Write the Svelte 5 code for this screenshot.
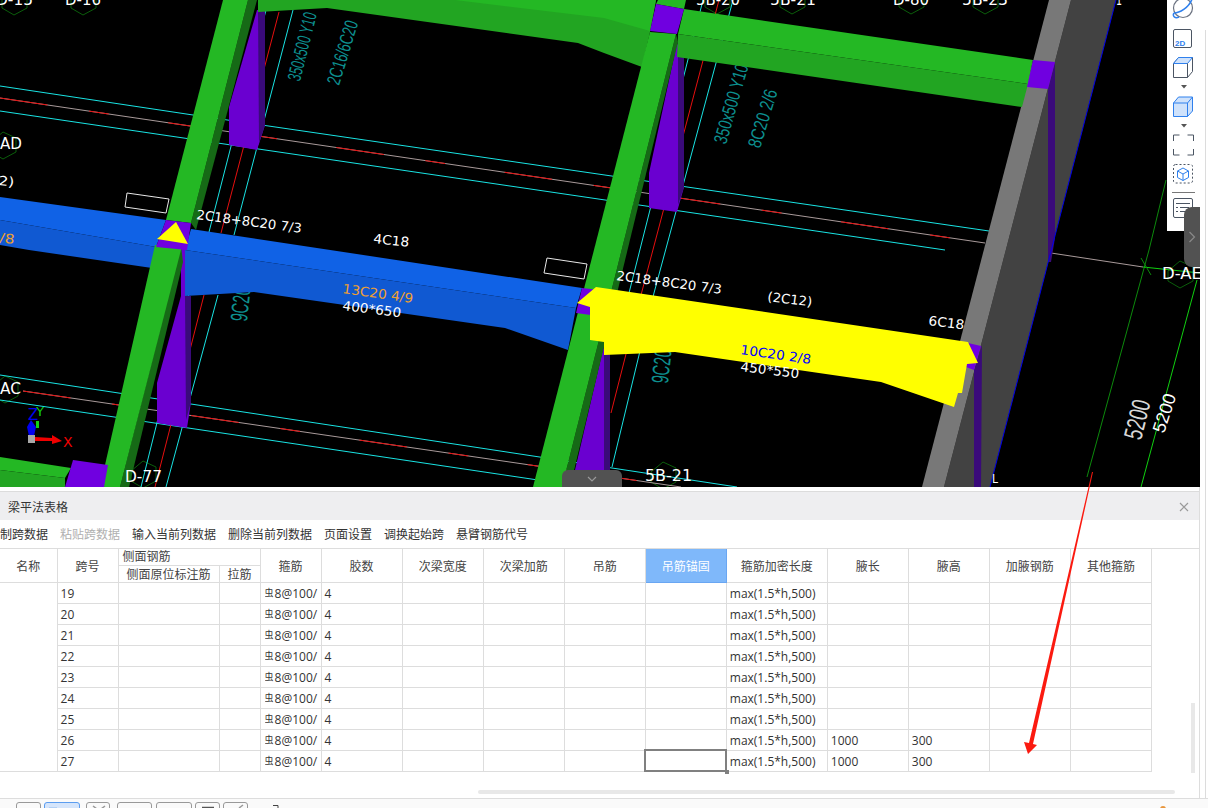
<script lang="ts">
	// scene data, page coordinates of the 3d view
	const cyanLines = [
		'0,86 193,115', '193,115 989,231', '0,111 945,250', '0,375 737,487', '0,400 585,487',
		'293,10 234,235', '266,10 209,232', '218,295 166,487', '190,290 141,487',
		'733,0 654,293 612,467', '703,0 629,293'
	];
	const midLines = ['0,98 985,243', '23,391 681,487'];
	const redLines = ['279,12 221,233', '204,295 155,487', '719,0 641,295 611,413'];
	const greenLines = [
		{ p: '1166,180 1149,250 1087,477', c: '#0c8a0c' },
		{ p: '1197,280 1141,487', c: '#10d010' },
		{ p: '1143,267 1200,273', c: '#10d010' },
		{ p: '1141,258 1151,275', c: '#0c8a0c' }
	];
	const hexes = [
		[3, 145], [5, 389], [143, 474], [663, 475], [1180, 274], [14, 1], [83, 1], [717, 0], [792, 0], [911, 0], [985, 0]
	];
	const cadTexts = [
		{ t: '350x500 Y10', x: 300, y: 82, r: -76, len: 70, h: 19 },
		{ t: '2C16/6C20', x: 339, y: 86, r: -73, len: 66, h: 19 },
		{ t: '350x500 Y10', x: 726, y: 145, r: -74, len: 82, h: 19 },
		{ t: '8C20 2/6', x: 760, y: 149, r: -73, len: 60, h: 19 },
		{ t: '9C20', x: 247, y: 322, r: -84, len: 34, h: 24 },
		{ t: '9C20', x: 668, y: 384, r: -84, len: 34, h: 24 }
	];
	const labels = [
		{ t: '2C18+8C20 7/3', x: 196, y: 219, r: 7.5, len: 106, size: 13, fill: '#fff' },
		{ t: '4C18', x: 373, y: 243, r: 6, len: 36, size: 13, fill: '#fff' },
		{ t: '2)', x: -2, y: 185, r: 6, len: 16, size: 13, fill: '#fff' },
		{ t: '/8', x: -1, y: 242, r: 7, len: 15, size: 13, fill: '#f0a030' },
		{ t: '13C20 4/9', x: 342, y: 293, r: 8, len: 71, size: 13, fill: '#f0a030' },
		{ t: '400*650', x: 342, y: 310, r: 7, len: 59, size: 13, fill: '#fff' },
		{ t: '2C18+8C20 7/3', x: 616, y: 280, r: 7.5, len: 106, size: 13, fill: '#fff' },
		{ t: '(2C12)', x: 767, y: 301, r: 7, len: 45, size: 13, fill: '#fff' },
		{ t: '6C18', x: 928, y: 325, r: 7, len: 36, size: 13, fill: '#fff' },
		{ t: '10C20 2/8', x: 740, y: 354, r: 8, len: 71, size: 13, fill: '#0000ff' },
		{ t: '450*550', x: 740, y: 371, r: 7, len: 59, size: 13, fill: '#fff' },
		{ t: 'AD', x: 0, y: 149, r: 0, len: 22, size: 16, fill: '#fff' },
		{ t: 'AC', x: 0, y: 394, r: 0, len: 21, size: 16, fill: '#fff' },
		{ t: 'D-77', x: 125, y: 482, r: 0, len: 37, size: 16, fill: '#fff' },
		{ t: '5B-21', x: 645, y: 481, r: 0, len: 47, size: 16, fill: '#fff' },
		{ t: 'D-AE', x: 1162, y: 279, r: 0, len: 40, size: 16, fill: '#fff' },
		{ t: 'L', x: 992, y: 483, r: 0, len: 6, size: 13, fill: '#fff' },
		{ t: 'D-15', x: -4, y: 5, r: 0, len: 37, size: 16, fill: '#fff' },
		{ t: 'D-16', x: 65, y: 5, r: 0, len: 36, size: 16, fill: '#fff' },
		{ t: '5B-20', x: 696, y: 5, r: 0, len: 44, size: 16, fill: '#fff' },
		{ t: '5B-21', x: 770, y: 5, r: 0, len: 46, size: 16, fill: '#fff' },
		{ t: 'D-80', x: 893, y: 5, r: 0, len: 36, size: 16, fill: '#fff' },
		{ t: '5B-23', x: 962, y: 5, r: 0, len: 46, size: 16, fill: '#fff' },
		{ t: '1', x: 1116, y: 5, r: 0, len: 6, size: 16, fill: '#fff' }
	];

	// table data
	const columns = [57, 61, 101, 41, 61, 81, 81, 81, 81, 81, 101, 81, 81, 81, 81];
	const tools = ['复制跨数据', '粘贴跨数据', '输入当前列数据', '删除当前列数据', '页面设置', '调换起始跨', '悬臂钢筋代号'];
	const plainHeads = ['胶数', '次梁宽度', '次梁加筋', '吊筋'];
	const tailHeads = ['箍筋加密长度', '腋长', '腋高', '加腋钢筋', '其他箍筋'];
	const rows = [19, 20, 21, 22, 23, 24, 25, 26, 27];
	const bottomButtons = [
		{ w: 25, gap: 3, mark: '' },
		{ w: 36, gap: 6, mark: 'M4 5.500h8', color: '#4a90e2' },
		{ w: 24, gap: 7, mark: 'M6 3l4 3M18 3l-4 3', color: '#999' },
		{ w: 35, gap: 4, mark: '' },
		{ w: 36, gap: 3, mark: '' },
		{ w: 25, gap: 3, mark: 'M6 4.500h12', color: '#555' },
		{ w: 25, gap: 24, mark: 'M19 2l-4 3', color: '#999' }
	];
</script>

<div class="window">
	<div class="upper">
		<div class="main">
			<div class="viewport">
				<svg class="scene" width="1200" height="487" viewBox="0 0 1200 487">
					{#each hexes as [x, y]}
						<polygon
							class="hex"
							points="{x - 12},{y - 3} {x},{y - 13} {x + 13},{y - 7} {x + 13},{y + 7} {x},{y + 14} {x - 12},{y + 7}"
						/>
					{/each}
					{#each cyanLines as p}
						<polyline class="line cyan" points={p} />
					{/each}
					{#each midLines as p}
						<polyline class="line grey" points={p} />
						<polyline class="line red dashed" points={p} />
					{/each}
					{#each redLines as p}
						<polyline class="line red" points={p} />
					{/each}
					<polyline class="line grey" points="1051,253 1143,267" />
					{#each greenLines as g}
						<polyline class="line" stroke={g.c} points={g.p} />
					{/each}

					{#each cadTexts as c}
						<text
							class="cad"
							x={c.x}
							y={c.y}
							font-size={c.h}
							textLength={c.len}
							lengthAdjust="spacingAndGlyphs"
							transform="rotate({c.r} {c.x} {c.y})">{c.t}</text
						>
					{/each}

					<!-- purple columns -->
					<polygon fill="#6a00d0" points="257,10 229,107 229,145 257,150 265,125 265,10" />
					<polygon fill="#3a0a7a" points="258,10 265,10 265,125 259,143" />
					<polygon fill="#6a00d0" points="181,296 191,296 191,402 187,428 157,423 157,383" />
					<polygon fill="#3a0a7a" points="185,296 191,296 191,402 186,420" />
					<polygon fill="#6a00d0" points="677,43 684,57 684,187 677,212 649,208 649,173" />
					<polygon fill="#3a0a7a" points="678,50 684,57 684,187 678,205" />
					<polygon fill="#6a00d0" points="610,345 604,345 575,470 575,487 610,487" />
					<polygon fill="#3a0a7a" points="604,345 610,345 610,487 604,487" />

					<!-- grey wall -->
					<polygon fill="#424242" points="1071,0 1116,0 990,487 944,487" />
					<polygon fill="#787878" points="1049,0 1071,0 944,487 922,487" />
					<polygon fill="#3a0a7a" points="1048,89 1055,62 1055,238 1051,262 1048,262" />
					<polygon fill="#3a0a7a" points="974,370 982,345 981,487 974,487" />
					<polyline class="line" stroke="#0000e6" points="1116,0 990,487" />

					<!-- green beams -->
					<polygon fill="#22a522" points="258,0 258,12 327,8 578,43 604,53 642,67 650,32 656,0" />
					<polygon fill="#24b824" points="455,0 656,0 650,31 604,18" />
					<polygon fill="#24b824" points="684,9 1033,60 1028,84 678,34" />
					<polygon fill="#22a522" points="678,34 1028,84 1022,107 677,57" />
					<polygon fill="#24b824" points="0,457 71,468 65,478 0,470" />
					<polygon fill="#22a522" points="0,470 65,478 65,487 0,487" />

					<!-- blue beam -->
					<polygon fill="#1062e6" points="0,197 166,220 156,247 0,220" />
					<polygon fill="#1059d2" points="0,220 156,247 152,268 29,250 0,245" />
					<polygon fill="#1062e6" points="191,229 582,288 576,308 185,250" />
					<polygon fill="#1059d2" points="185,250 576,308 568,350 505,328 254,292 185,296" />
					<polygon fill="#6a00d0" points="181,246 185,246 185,296 181,297" />

					<!-- green columns -->
					<polygon fill="#166a16" points="248,0 257,0 196,230 191,223" />
					<polygon fill="#24b824" points="223,0 248,0 191,223 166,220" />
					<polygon fill="#166a16" points="181,246 183,262 129,487 120,487" />
					<polygon fill="#24b824" points="155,245 182,246 120,487 100,487" />
					<polygon fill="#166a16" points="676,34 678,42 570,487 562,487" />
					<polygon fill="#24b824" points="650,32 676,34 562,487 533,487" />
					<polygon fill="#24b824" points="658,0 686,0 684,9 656,4" />

					<!-- nodes -->
					<polygon fill="#7000e0" points="656,4 684,9 677,34 650,31" />
					<polygon fill="#7000e0" points="1033,60 1055,62 1048,89 1027,87" />
					<polygon fill="#7000e0" points="166,220 191,223 187,250 156,247" />
					<polygon fill="#ffff00" points="176,222 157,239 188,244" />
					<polygon fill="#7000e0" points="582,288 600,290 598,316 576,313" />
					<polygon fill="#7000e0" points="968,343 981,346 974,370 966,367" />

					<!-- yellow beam, selected, sits over the column -->
					<polygon
						fill="#ffff00"
						points="577,303 596,287 968,342 978,363 967,364 962,393 958,393 954,407 881,382 675,352 604,355 604,342 590,340 590,307"
					/>
					<polygon fill="#7000e0" points="73,460 108,465 104,487 65,487" />

					<polygon class="tag" points="127,193 169,199 166,213 125,207" />
					<polygon class="tag" points="547,258 587,264 584,279 544,273" />

					{#each labels as l}
						<text
							class="label"
							x={l.x}
							y={l.y}
							font-size={l.size}
							fill={l.fill}
							textLength={l.len}
							lengthAdjust="spacingAndGlyphs"
							transform="rotate({l.r} {l.x} {l.y})">{l.t}</text
						>
					{/each}
					<text class="dim" x="1141" y="441" font-size="26" textLength="40" lengthAdjust="spacingAndGlyphs" transform="rotate(-76 1141 441)">5200</text>
					<text class="dim2" x="1164" y="434" font-size="18" textLength="40" lengthAdjust="spacingAndGlyphs" transform="rotate(-72 1164 434)">5200</text>

					<!-- axis gizmo -->
					<text x="28" y="420" font-size="15" fill="#0000f0" class="axis">Z</text>
					<text x="36" y="416" font-size="13" fill="#10d010" class="axis">Y</text>
					<polygon fill="#0000f0" points="31,420 36,427 34,436 29,436 27,427" />
					<rect x="36" y="421" width="3" height="7" fill="#10d010" />
					<rect x="28" y="435" width="7" height="8" fill="#a8a8a8" />
					<polygon fill="#f00000" points="35,437 52,438 52,435 62,441 52,444 52,441 35,441" />
					<text x="63" y="447" font-size="14" fill="#f00000" class="axis">X</text>
				</svg>

				<div class="side-tools">
					<svg width="33" height="231" viewBox="0 0 33 231" fill="none">
						<circle cx="16" cy="8" r="9.5" stroke="#6b7280" stroke-width="1.2" />
						<path d="M7 13c5 0 15-5 18-14" stroke="#2f80ed" stroke-width="1.6" />
						<path d="M7 13c-2 3 1 6 5 4" stroke="#2f80ed" stroke-width="1.4" />
						<rect x="6.5" y="29.5" width="18" height="18" rx="1.5" stroke="#4b5563" />
						<text x="8" y="46" font-size="8" font-weight="700" fill="#2f80ed" class="two-d">2D</text>
						<path d="M6.5 63.5l5-6h14v14l-5 6h-14z" stroke="#4b5563" />
						<path d="M6.5 63.5l5-6h14l-5 6z" fill="#cfe2fb" stroke="#2f80ed" />
						<path d="M20.5 63.5v14" stroke="#4b5563" />
						<path d="M14 85h6l-3 3.500z" fill="#555" />
						<path d="M6.500 103l5-6h14v14l-5 5.500h-14z" fill="#cfe2fb" stroke="#2f80ed" />
						<path d="M6.500 103h14l5-6M20.500 103v13.500" stroke="#2f80ed" />
						<path d="M14 124h6l-3 3.500z" fill="#555" />
						<path d="M6.500 141v-6h6M20.500 135h6v6M26.500 149v6h-6M12.500 155h-6v-6" stroke="#4b5563" />
						<rect x="6.500" y="164.500" width="19" height="18.500" rx="2" stroke="#4b5563" stroke-dasharray="2 2" />
						<path d="M16 168l5.500 3v6.500l-5.500 3-5.500-3V171zM10.500 171l5.500 3 5.500-3M16 174v6.500" stroke="#2f80ed" />
						<path d="M5 192.500h23" stroke="#777" />
						<rect x="6.500" y="198.500" width="19" height="19" rx="1.500" stroke="#4b5563" />
						<path d="M9 203.500h14M9 207.500h2M13 207.500h9M9 211.500h2M13 211.500h6" stroke="#4b5563" />
					</svg>
				</div>
				<div class="side-flap">
					<svg width="8" height="12" viewBox="0 0 8 12" fill="none"><path d="M1.500 1l5 5-5 5" stroke="#8a8a8a" stroke-width="1.200" /></svg>
				</div>
				<div class="bottom-flap">
					<svg width="10" height="6" viewBox="0 0 10 6" fill="none"><path d="M1 1l4 4 4-4" stroke="#9a9a9a" stroke-width="1.200" /></svg>
				</div>
			</div>

			<section class="panel">
				<header class="title">
					<span>梁平法表格</span>
					<svg width="10" height="10" viewBox="0 0 10 10" fill="none"><path d="M1 1l8 8M9 1l-8 8" stroke="#9a9a9a" stroke-width="1.200" /></svg>
				</header>

				<nav class="tools">
					{#each tools as tool, i}
						<span class:off={i === 1}>{tool}</span>
					{/each}
				</nav>

				<div class="grid-wrap">
					<table>
						<colgroup>
							{#each columns as w}
								<col width={w} />
							{/each}
						</colgroup>
						<thead>
							<tr class="head-a">
								<th rowspan="2">名称</th>
								<th rowspan="2">跨号</th>
								<th colspan="2" class="group">侧面钢筋</th>
								<th rowspan="2">箍筋</th>
								{#each plainHeads as h}
									<th rowspan="2">{h}</th>
								{/each}
								<th rowspan="2" class="picked">吊筋锚固</th>
								{#each tailHeads as h}
									<th rowspan="2">{h}</th>
								{/each}
							</tr>
							<tr class="head-b">
								<th>侧面原位标注筋</th>
								<th>拉筋</th>
							</tr>
						</thead>
						<tbody>
							{#each rows as n, i}
								<tr>
									{#if i === 0}
										<td rowspan={rows.length} class="merged"></td>
									{/if}
									<td>{n}</td>
									<td></td>
									<td></td>
									<td><div class="clip"><span class="grade">虫</span>8@100/</div></td>
									<td>4</td>
									<td></td>
									<td></td>
									<td></td>
									<td class:current={n === 27}>
										{#if n === 27}<i class="handle"></i>{/if}
									</td>
									<td>max(1.5*h,500)</td>
									<td>{n > 25 ? 1000 : ''}</td>
									<td>{n > 25 ? 300 : ''}</td>
									<td></td>
									<td></td>
								</tr>
							{/each}
						</tbody>
					</table>
					<div class="scroll-v"></div>
					<div class="scroll-h"></div>
				</div>
			</section>
		</div>
		<div class="gutter"></div>
	</div>

	<footer class="status">
		{#each bottomButtons as b, i}
			<span class="btn" class:on={i === 1} style="width: {b.w}px; margin-right: {b.gap}px">
				{#if b.mark}
					<svg width={b.w - 2} height="8" fill="none"><path d={b.mark} stroke={b.color} stroke-width="1.500" /></svg>
				{/if}
			</span>
		{/each}
		<svg class="glyph" width="8" height="6" fill="none"><path d="M1 1.500h5v4" stroke="#444" /></svg>
		<span class="dot"></span>
	</footer>

	<svg class="arrow" width="1208" height="808" viewBox="0 0 1208 808">
		<polygon fill="#fb1a10" points="1092,472 1093,472 1033,744 1037,745 1028,754 1024,742 1029,743" />
	</svg>
</div>

<style>
	:global(body) {
		margin: 0;
		background: #fff;
	}

	.window {
		position: relative;
		display: flex;
		flex-direction: column;
		width: 1208px;
		height: 808px;
		overflow: hidden;
		font-family: 'Open Sans', 'Noto Sans CJK SC', sans-serif;
		font-size: 12px;
		color: #333;
	}

	.upper {
		display: flex;
		height: 798px;
		flex: none;
	}

	.main {
		width: 1200px;
		display: flex;
		flex-direction: column;
	}

	.gutter {
		flex: 1;
		margin-top: 30px;
		background: linear-gradient(to right, #fff 5px, #dcdcdc 5px, #dcdcdc 6px, #fff 6px);
	}

	.viewport {
		position: relative;
		height: 487px;
		background: #000;
		overflow: hidden;
		flex: none;
	}

	.scene {
		display: block;
		font-family: 'DejaVu Sans', sans-serif;
	}

	.line {
		fill: none;
		stroke-width: 1;
	}
	.cyan {
		stroke: #19e3e3;
	}
	.red {
		stroke: #e60f0f;
	}
	.dashed {
		stroke-dasharray: 48 42 20 60;
	}
	.grey {
		stroke: #a89a9a;
	}
	.hex {
		fill: none;
		stroke: #0b5e0b;
	}
	.cad {
		fill: #0d8f8f;
		font-family: 'Liberation Sans', sans-serif;
	}
	.tag {
		fill: none;
		stroke: #e8e8e8;
	}
	.label {
		font-family: 'DejaVu Sans', sans-serif;
	}
	.dim,
	.dim2 {
		fill: #d8d8d8;
		font-family: 'Liberation Sans', sans-serif;
	}
	.dim2 {
		fill: #fff;
	}
	.axis {
		font-family: 'DejaVu Sans', sans-serif;
	}
	.two-d {
		font-family: 'Liberation Sans', sans-serif;
	}

	.side-tools {
		position: absolute;
		left: 1167px;
		top: 0;
		width: 33px;
		height: 231px;
		background: #fff;
	}
	.side-tools svg {
		display: block;
	}

	.side-flap {
		position: absolute;
		left: 1184px;
		top: 207px;
		width: 16px;
		height: 60px;
		background: #525252;
		border-radius: 8px 0 0 8px;
		display: flex;
		align-items: center;
		justify-content: center;
	}

	.bottom-flap {
		position: absolute;
		left: 562px;
		top: 470px;
		width: 60px;
		height: 17px;
		background: #525252;
		border-radius: 6px 6px 0 0;
		display: flex;
		align-items: center;
		justify-content: center;
	}

	.panel {
		flex: 1;
		display: flex;
		flex-direction: column;
		padding-top: 4px;
		border-right: 1px solid #ddd;
		box-sizing: border-box;
		min-height: 0;
	}

	.title {
		height: 27px;
		padding: 1px 10px 0 8px;
		border-top: 1px solid #dcdcdc;
		background: #eeeef0;
		display: flex;
		align-items: center;
		justify-content: space-between;
		flex: none;
	}

	.tools {
		height: 28px;
		display: flex;
		align-items: center;
		gap: 12px;
		margin-left: -12px;
		white-space: nowrap;
		flex: none;
	}
	.tools .off {
		color: #b0b0b0;
	}

	.grid-wrap {
		position: relative;
		height: 250px;
		border-top: 1px solid #ddd;
		flex: none;
	}

	table {
		border-collapse: collapse;
		table-layout: fixed;
		width: 1152px;
	}

	th,
	td {
		border: 1px solid #ddd;
		padding: 0;
		overflow: hidden;
		white-space: nowrap;
	}
	thead tr:first-child th {
		border-top: none;
	}
	th:first-child,
	td.merged {
		border-left: none;
	}

	th {
		font-weight: 400;
		color: #444;
		text-align: center;
		padding-top: 2px;
	}
	.head-a {
		height: 16px;
	}
	.head-b {
		height: 17px;
	}
	.head-a th,
	.head-b th {
		line-height: 15px;
	}
	.head-b th {
		padding-top: 1px;
	}
	th.group {
		text-align: left;
		padding: 0 0 0 4px;
	}
	th.picked {
		background: #7fb8fa;
		color: #fff;
		border: 1px solid #69a6f2;
	}

	tbody tr {
		height: 21px;
	}
	td {
		padding: 2px 3px 0;
		line-height: 18px;
		vertical-align: top;
		color: #333;
	}
	td.current {
		position: relative;
		outline: 2px solid #808080;
		outline-offset: -1px;
		overflow: visible;
	}
	.handle {
		position: absolute;
		right: -3px;
		bottom: -3px;
		width: 4px;
		height: 4px;
		background: #808080;
	}
	.clip {
		overflow: hidden;
		margin-left: 1px;
		margin-right: -3px;
		height: 18px;
	}
	.grade {
		position: relative;
		top: -2px;
		font-size: 9px;
		line-height: 1;
		font-family: 'Noto Sans CJK SC', sans-serif;
		margin-right: 1px;
	}

	.scroll-v {
		position: absolute;
		left: 1191px;
		top: 154px;
		width: 4px;
		height: 70px;
		background: #e8e8e8;
	}
	.scroll-h {
		position: absolute;
		left: 478px;
		top: 241px;
		width: 697px;
		height: 4px;
		background: #e8e8e8;
		border-radius: 2px;
	}

	.status {
		position: relative;
		flex: 1;
		border-top: 1px solid #ddd;
		background: #fafafa;
		display: flex;
		padding: 3px 0 0 16px;
		overflow: hidden;
	}
	.btn {
		height: 14px;
		border: 1px solid #999;
		border-radius: 3px;
		box-sizing: border-box;
		flex: none;
	}
	.btn svg {
		display: block;
	}
	.btn.on {
		border-color: #5b9df0;
		background: #d5e5fb;
	}
	.glyph {
		flex: none;
		margin-top: 2px;
	}
	.dot {
		position: absolute;
		left: 1160px;
		top: 7px;
		width: 6px;
		height: 6px;
		border-radius: 50%;
		background: #e8963c;
	}

	.arrow {
		position: absolute;
		left: 0;
		top: 0;
		pointer-events: none;
	}
</style>
